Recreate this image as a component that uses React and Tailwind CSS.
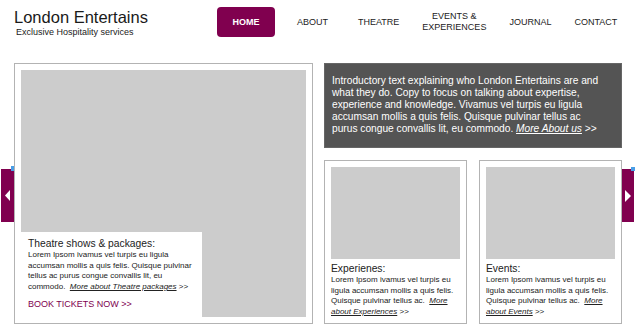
export default function App() {
  const navItems = [
    { label: "ABOUT", ml: "ml-[22px]" },
    { label: "THEATRE", ml: "ml-[30px]" },
    { label: "EVENTS &\nEXPERIENCES", ml: "ml-[23px]" },
    { label: "JOURNAL", ml: "ml-[23px]" },
    { label: "CONTACT", ml: "ml-[23px]" },
  ];

  return (
    <div className="relative h-[330px] w-[636px] overflow-hidden bg-white font-['Liberation_Sans',Arial,sans-serif] text-[#222]">
      {/* Header */}
      <header className="flex h-[63px]">
        <div className="w-[217px] pl-[14px] pt-[9px]">
          <div className="text-[16.5px] leading-[17px] text-[#1a1a1a]">London Entertains</div>
          <div className="ml-[2px] mt-[1px] text-[9px] leading-[10px]">Exclusive Hospitality services</div>
        </div>
        <nav className="flex items-start pt-[7px] text-[9px] leading-[11px]">
          <a className="flex h-[30px] w-[58px] items-center justify-center rounded-[4px] bg-[#80004f] font-bold text-white">
            HOME
          </a>
          {navItems.map((n) => (
            <a
              key={n.label}
              className={`flex h-[30px] items-center whitespace-pre text-center ${n.ml}`}
            >
              {n.label}
            </a>
          ))}
        </nav>
      </header>

      {/* Main */}
      <main className="flex gap-[11px] pl-[14px]">
        <section className="h-[261px] w-[299px] border border-[#b3b3b3] p-[6px]">
          <div className="flex h-full flex-col justify-end bg-[#cccccc]">
            <div className="h-[85px] w-[181px] bg-white px-[7px] pt-[6px]">
              <h2 className="text-[10.3px] leading-[12px]">Theatre shows &amp; packages:</h2>
              <p className="text-[8px] leading-[10.67px]">
                Lorem Ipsom ivamus vel turpis eu ligula accumsan mollis a quis felis. Quisque pulvinar tellus ac purus congue convallis lit, eu commodo.&nbsp;{" "}
                <a className="italic underline">More about Theatre packages</a> &gt;&gt;
              </p>
              <a className="mt-[6px] block text-[9px] leading-[11px] text-[#80004f]">BOOK TICKETS NOW &gt;&gt;</a>
            </div>
          </div>
        </section>

        <div className="flex w-[298px] flex-col">
          <div className="h-[85px] border border-[#666] bg-[#545454] pl-[7px] pr-[16px] pt-[11px] text-[10.2px] leading-[12px] text-white">
            Introductory text explaining who London Entertains are and what they do. Copy to focus on talking about expertise, experience and knowledge. Vivamus vel turpis eu ligula accumsan mollis a quis felis. Quisque pulvinar tellus ac purus congue convallis lit, eu commodo.{" "}
            <a className="italic underline">More About us</a> &gt;&gt;
          </div>

          <div className="mt-[12px] flex gap-[12px]">
            {[
              { title: "Experienes:", link: "about Experiences" },
              { title: "Events:", link: "about Events" },
            ].map((c) => (
              <div key={c.title} className="h-[164px] w-[143px] border border-[#b3b3b3] p-[6px]">
                <div className="h-[92px] bg-[#cccccc]" />
                <h3 className="mt-[4px] text-[10.3px] leading-[12px]">{c.title}</h3>
                <p className="text-[8px] leading-[10.67px]">
                  Lorem Ipsom ivamus vel turpis eu ligula accumsan mollis a quis felis. Quisque pulvinar tellus ac.&nbsp;{" "}
                  <a className="italic underline">More {c.link}</a> &gt;&gt;
                </p>
              </div>
            ))}
          </div>
        </div>
      </main>

      {/* Carousel arrows */}
      <button className="absolute left-[1px] top-[169px] flex h-[53px] w-[13px] items-center justify-center bg-[#80004f]">
        <svg width="5" height="11" viewBox="0 0 5 11">
          <polygon points="5,0 0,5.5 5,11" fill="#fff" />
        </svg>
      </button>
      <span className="absolute left-[11px] top-[166px] h-[5px] w-[3px] bg-[#4a9ee6]" />

      <button className="absolute left-[622px] top-[169px] flex h-[53px] w-[12px] items-center justify-center bg-[#80004f]">
        <svg width="6" height="12" viewBox="0 0 6 12">
          <polygon points="0,0 6,6 0,12" fill="#fff" />
        </svg>
      </button>
      <span className="absolute left-[631px] top-[167px] h-[4px] w-[4px] bg-[#4a9ee6]" />
    </div>
  );
}
